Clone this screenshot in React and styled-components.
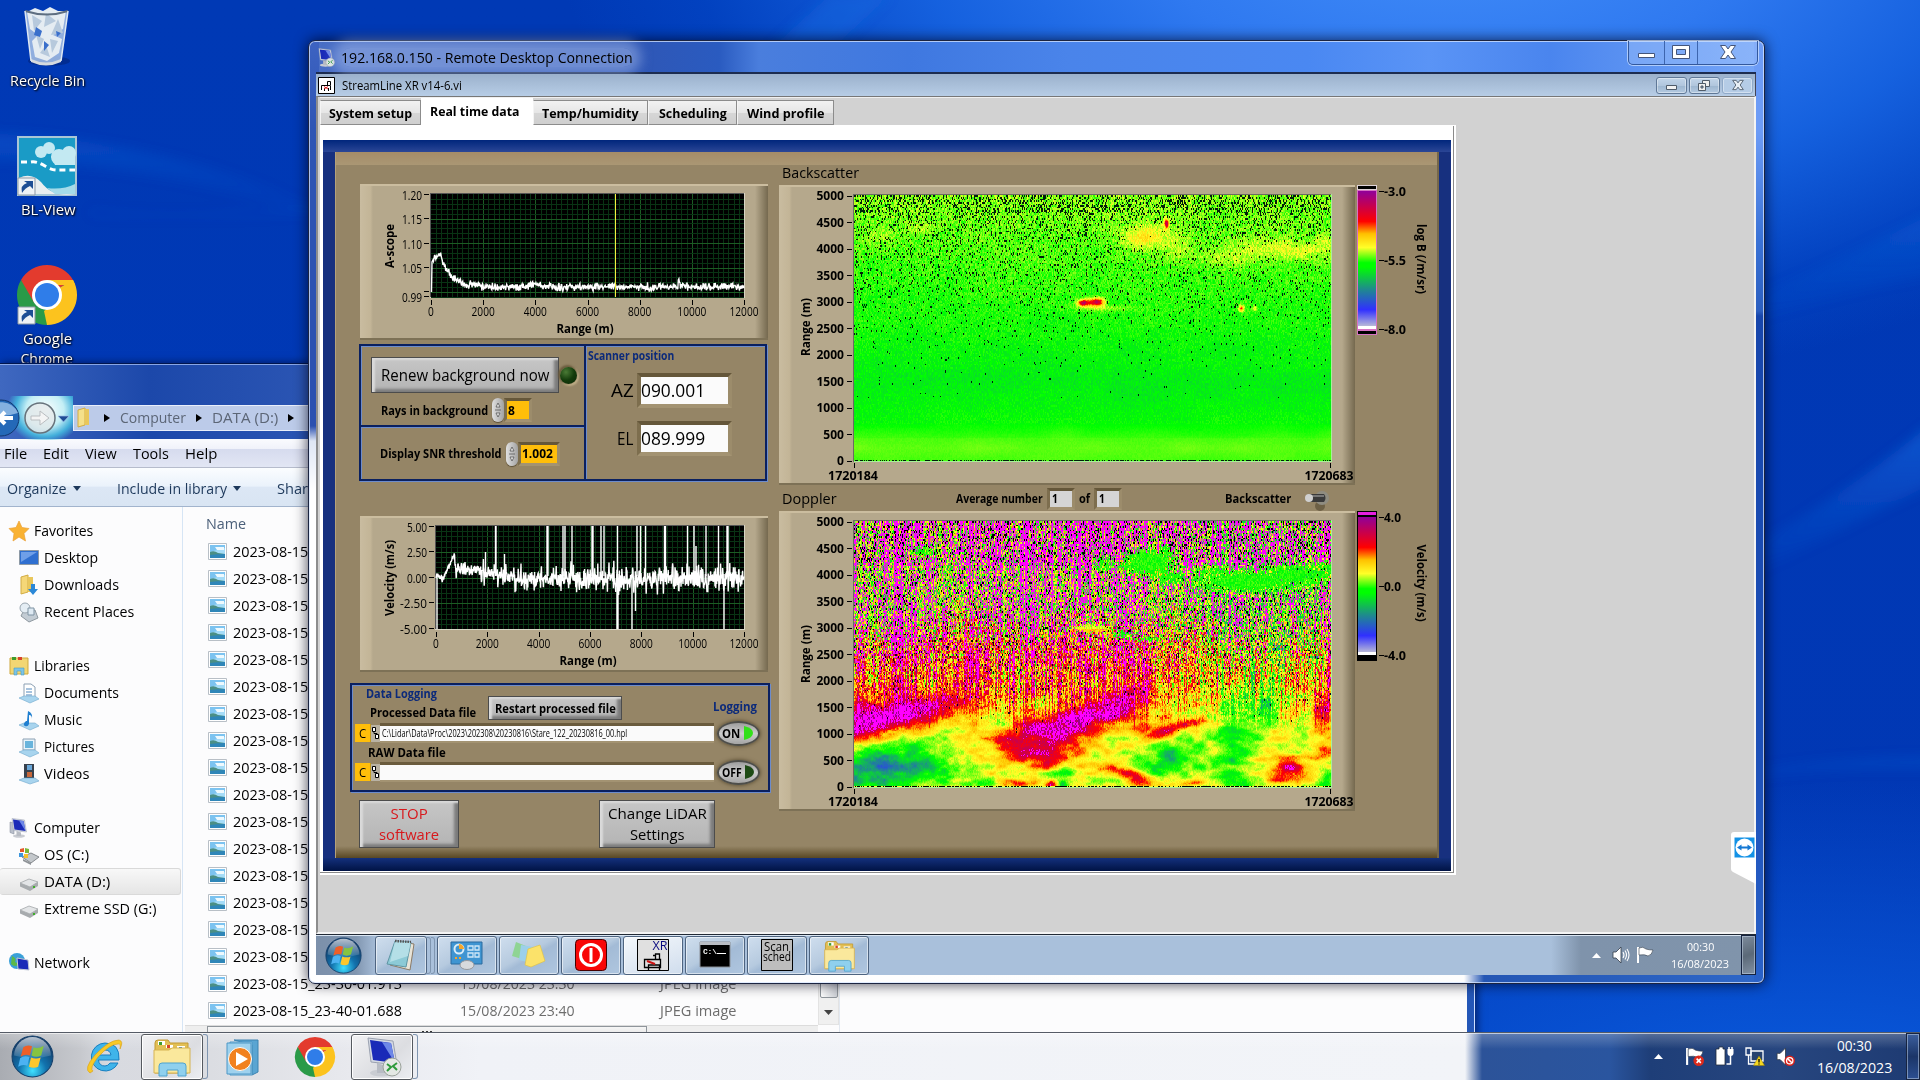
import React, { useEffect, useLayoutEffect, useRef } from 'react';
import styled, { createGlobalStyle, css } from 'styled-components';

const navy = '#0c2a7a';
const tan = '#958566';
const scopeBg = '#b5a88c';

const GlobalStyle = createGlobalStyle`
	* {
		box-sizing: border-box;
	}

	body {
		margin: 0;
		overflow: hidden;
		font-family: 'Open Sans', 'Noto Sans', sans-serif;
		color: #000;
	}

	svg, canvas {
		display: block;
		flex: none;
		overflow: visible;
	}
`;

/* ---------- helpers ---------- */

const makeRandom = (seed) => {
	let s = seed;
	return () => {
		s = (s * 1664525 + 1013904223) % 4294967296;
		return s / 4294967296;
	};
};

const FitBox = styled.span`
	display: inline-block;
	vertical-align: top;
	flex: none;
	width: ${p => p.$w}px;
	height: ${p => p.$lh || Math.round(p.$size * 1.4)}px;
	line-height: ${p => p.$lh || Math.round(p.$size * 1.4)}px;
	font-size: ${p => p.$size}px;
	font-weight: ${p => p.$bold ? 700 : 400};
	color: ${p => p.$color || 'inherit'};
	white-space: nowrap;

	> span {
		display: inline-block;
		transform-origin: 0 50%;
	}
`;

// squeezes a text into the given width
const Fit = ({ w, size = 14, lh, bold, color, children }) => {
	const ref = useRef(null);

	useLayoutEffect(() => {
		const el = ref.current;
		el.style.transform = `scaleX(${w / el.offsetWidth})`;
	}, [w, children]);

	return (
		<FitBox $w={w} $size={size} $lh={lh} $bold={bold} $color={color}>
			<span ref={ref}>{children}</span>
		</FitBox>
	);
};

const SvgText = ({ x, y, w, children, size = 12, bold, anchor = 'middle', rotate, color = '#000' }) => (
	<text
		x={rotate ? 0 : x}
		y={rotate ? 0 : y}
		fill={color}
		fontSize={size}
		fontWeight={bold ? 700 : 400}
		textAnchor={anchor}
		dominantBaseline="central"
		textLength={w}
		lengthAdjust="spacingAndGlyphs"
		transform={rotate ? `translate(${x} ${y}) rotate(${rotate})` : undefined}
	>
		{children}
	</text>
);

/* ---------- icons ---------- */

const Orb = ({ size }) => (
	<svg width={size} height={size} viewBox="0 0 42 42">
		<defs>
			<radialGradient id="orb" cx="50%" cy="85%" r="75%">
				<stop offset="0" stopColor="#3fe0ff" />
				<stop offset=".45" stopColor="#1272ad" />
				<stop offset="1" stopColor="#123a66" />
			</radialGradient>
			<linearGradient id="orbTop" x1="0" y1="0" x2="0" y2="1">
				<stop offset="0" stopColor="#fff" stopOpacity=".7" />
				<stop offset="1" stopColor="#fff" stopOpacity=".1" />
			</linearGradient>
		</defs>
		<circle cx="21" cy="21" r="20" fill="url(#orb)" stroke="#16406b" />
		<path d="M3 20a18 18 0 0 1 36 0q-18 5-36 0z" fill="url(#orbTop)" />
		<path d="M12 12q4-3 8.500-1l-2 9q-4.500-2-9 1z" fill="#ee5f28" />
		<path d="M22 12q4 2 10-1.500l-2.500 9.500q-5 2.500-9.500 0z" fill="#86c440" />
		<path d="M9 22.500q4-3 9-1l-2 8.500q-4.500-2-9 1z" fill="#4cb2f2" />
		<path d="M19.500 22q5 2 9.500 0l-2.500 9q-4 2-9 0z" fill="#fcc72c" />
	</svg>
);

const ChromeIcon = ({ size }) => (
	<svg width={size} height={size} viewBox="0 0 60 60">
		<path d="M30 30L4 15A30 30 0 0 1 56 15z" fill="#e33b2e" />
		<path d="M30 30L56 15A30 30 0 0 1 30 60z" fill="#fcc31e" />
		<path d="M30 30L30 60A30 30 0 0 1 4 15z" fill="#2a9a48" />
		<path d="M30 15h26a30 30 0 0 1 2 5H30z" fill="#fcc31e" />
		<path d="M4 15l13 22.500 8-9-5-8z" fill="#e33b2e" />
		<path d="M43 37L30 60l-3-14 8-6z" fill="#fcc31e" />
		<circle cx="30" cy="30" r="15" fill="#fff" />
		<circle cx="30" cy="30" r="12" fill="#2f7de9" />
	</svg>
);

const MonitorIcon = ({ size, remote }) => (
	<svg width={size} height={size} viewBox="0 0 40 40">
		<ellipse cx="20" cy="36" rx="12" ry="3.500" fill="#c9ccd2" />
		<path d="M15 26l9 3v7h-9z" fill="#b8bcc4" />
		{!remote && <path d="M2 8l8 2v22l-8-3z" fill="#b9bfcb" stroke="#7d8594" />}
		<path d="M6 1l25 3 4 24-26-3z" fill="#d5dae4" stroke="#9aa1b0" />
		<path d="M8 3l21 3 4 20-22-3z" fill="#1a2ab8" />
		<path d="M20 5l9 1 4 20z" fill="#6d87e8" />
		{remote && (
			<>
				<circle cx="30" cy="30" r="9" fill="#e4e8e4" stroke="#9aa19a" />
				<path d="M25 27l4 3-4 4M35 26l-4 3 4 4" stroke="#2d9a3a" strokeWidth="2" fill="none" />
			</>
		)}
	</svg>
);

const FoldersIcon = ({ size }) => (
	<svg width={size} height={size} viewBox="0 0 40 40">
		<path d="M3 6q0-3 3-3h10l2 3h18v30H3z" fill="#e2bf55" stroke="#c29a34" />
		<path d="M6 4h7v4H6z" fill="#fff" />
		<path d="M7 5h3v3H7z" fill="#3c9c2e" />
		<path d="M14 8h7v3h-7z" fill="#fff" />
		<path d="M15 8h3v3h-3z" fill="#d8442a" />
		<path d="M25 9h8v3h-8z" fill="#fff" />
		<path d="M27 10h3v3h-3z" fill="#2d7fc4" />
		<path d="M2 13h15l3-2h18v25H2z" fill="#fae89c" stroke="#d6b353" />
		<path d="M7 39V29q0-3 3-3h21q3 0 3 3v10h-8v-6H15v6z" fill="#8fd0ee" stroke="#4fa3cf" />
	</svg>
);

const IeIcon = () => (
	<svg width="40" height="40" viewBox="0 0 40 40">
		<path d="M20 6a14 14 0 1 0 13 20h-8q-2 3-5 3-6 0-6.500-6H34Q35 6 20 6zm-6 12q1-5 6-5t6 5z" fill="#3fb4ea" stroke="#1a7fc0" />
		<path d="M5 36Q-2 32 10 18 24 3 34 3q5 1 1 9 1-6-2-5-8 0-20 13Q4 32 8 34z" fill="#f8c927" stroke="#d99e10" strokeWidth=".6" />
	</svg>
);

const PlayerIcon = () => (
	<svg width="38" height="40" viewBox="0 0 38 40">
		<path d="M10 3h24v32l-6 3V8z" fill="#5aa5d2" stroke="#3d83b0" />
		<path d="M6 5h22v33H6z" fill="#bfe2f4" stroke="#4c97c6" />
		<path d="M3 6h24v31H3z" fill="#9fd2ee" stroke="#4c97c6" />
		<circle cx="16" cy="22" r="11.500" fill="#f1811f" stroke="#fff" />
		<path d="M12 15l12 7-12 7z" fill="#fff" />
	</svg>
);

const ViIcon = ({ width = 17, height = 17 }) => (
	<svg width={width} height={height} viewBox="0 0 17 17">
		<path d="M.5 .5h16v16H.5z" fill="#fff" stroke="#000" />
		<path d="M3.500 13V8.500h9V13M6.500 14V11M10.500 14V11M9.500 8V4.500h3V8" stroke="#000" fill="none" />
		<path d="M6 9.500l4 2.500M10 9.500l-4 2.500" stroke="#d22" fill="none" />
	</svg>
);

const XrIcon = () => (
	<svg width="32" height="32" viewBox="0 0 32 32">
		<path d="M.5 .5h31v31H.5z" fill="#e0e0e0" stroke="#000" />
		<text x="15.500" y="11" fontSize="12" textLength="15" lengthAdjust="spacingAndGlyphs" fill="#0a0a80">XR</text>
		<path d="M7.500 20.500h16v8h-16zM11.500 31v-5h11v5M18.500 20v-5h4v5M16 16.500h3" fill="none" stroke="#000" strokeWidth="1.300" />
		<path d="M10 22l8 3" stroke="#c11" strokeWidth="2" />
	</svg>
);

const NotepadIcon = () => (
	<svg width="34" height="34" viewBox="0 0 34 34">
		<path d="M12 3l18 3-4 26-20-5z" fill="#e8e4d8" stroke="#8a7a66" />
		<path d="M11 3l16 1-5 25-19-3z" fill="#8ccad6" stroke="#5e95a3" />
		<path d="M11 3l16 1-3 14-18 6z" fill="#c4e8ee" opacity=".7" />
		<path d="M11 3l16 1" stroke="#555" strokeWidth="2.500" strokeDasharray="1.500 1" />
	</svg>
);

const ControlPanelIcon = () => (
	<svg width="34" height="32" viewBox="0 0 34 32">
		<path d="M1 3h31v22H1z" fill="#3f95d2" stroke="#2a6a9f" />
		<circle cx="9" cy="10" r="4.500" fill="none" stroke="#d8ecf8" strokeWidth="2" />
		<path d="M9 10V5a5 5 0 0 1 5 5z" fill="#f5a62b" />
		<path d="M18 7h5v4h-5zM25 7h4v4h-4zM18 14h5v4h-5zM25 14h4v4h-4z" fill="none" stroke="#cfe7f7" strokeWidth="1.300" />
		<path d="M5 19h2M9 19h2" stroke="#f5a62b" strokeWidth="2" />
		<ellipse cx="17" cy="26" rx="7" ry="4.500" fill="#d8dadd" stroke="#96999e" />
	</svg>
);

const NotesIcon = () => (
	<svg width="34" height="28" viewBox="0 0 34 28">
		<path d="M4 1l10 4-4 13-10-3z" fill="#8fd494" />
		<path d="M9 4l13 2-3 16-12-3z" fill="#9cd0ea" />
		<path d="M16 8l12-4 5 16-14 6-6-2z" fill="#fbe26a" stroke="#e0bf3d" strokeWidth=".6" />
	</svg>
);

const PowerIcon = () => (
	<svg width="32" height="32" viewBox="0 0 32 32">
		<rect x=".5" y=".5" width="31" height="31" rx="4" fill="#f80606" stroke="#400" />
		<circle cx="16" cy="16" r="10.500" fill="none" stroke="#fff" strokeWidth="3" />
		<path d="M16 9v14" stroke="#fff" strokeWidth="3" />
	</svg>
);

const CmdIcon = () => (
	<svg width="32" height="28" viewBox="0 0 32 28">
		<path d="M1 1h30v25H1z" fill="#000" stroke="#8a8f96" />
		<path d="M1 1h30v3H1z" fill="#b9bdc4" />
		<text x="4" y="13" fontSize="8" fontWeight="700" fill="#fff" fontFamily="Liberation Mono, monospace" textLength="14">C:\</text>
		<path d="M18 12.500h9" stroke="#fff" />
	</svg>
);

const SchedIcon = () => (
	<svg width="32" height="32" viewBox="0 0 32 32">
		<path d="M.5 .5h31v31H.5z" fill="#bdbdbd" stroke="#000" />
		<text x="3" y="11.500" fontSize="12" textLength="25" lengthAdjust="spacingAndGlyphs">Scan</text>
		<text x="2" y="22" fontSize="12" textLength="28" lengthAdjust="spacingAndGlyphs">sched</text>
	</svg>
);

const RecycleIcon = () => (
	<svg width="50" height="60" viewBox="0 0 50 60">
		<ellipse cx="27" cy="54" rx="21" ry="5" fill="#01257c" opacity=".6" />
		<path d="M3 4l6 50q15 6 30 0l7-50z" fill="#a9c3e6" opacity=".85" />
		<path d="M5 5l8-4 8 3 7-4 8 4 8 0-3 18-10 6 9 4-3 14-12 8-12-4-3-16 6-6-8-6z" fill="#e5ecf2" />
		<path d="M10 8l10 6-8 10zM24 6l10 8-12 6zM36 12l5 14-12 2zM14 28l8 4-4 10zM28 32l8 2-6 12zM18 46l6-8 4 12z" fill="#b7c9dc" />
		<path d="M14 20l6 4-2 6-6-2zM22 34l5 4-5 6zM34 24l5 2-4 4z" fill="#3a6fcb" />
		<path d="M3 4q22 7 43 0" fill="none" stroke="#5e6e80" strokeWidth="2" />
		<path d="M9 52q15 7 30 0l0 3q-15 7-30 0z" fill="#d6dade" />
		<path d="M3 4l6 50M46 4l-7 50" stroke="#dfe8f2" strokeWidth="1.500" />
	</svg>
);

const Shortcut = () => (
	<g>
		<path d="M1 42h17v17H1z" fill="#eef2f5" stroke="#8d99a5" />
		<path d="M5 57q-2-8 5-10l-3-2h9v8l-3-3q-5 2-8 7z" fill="#1d4e94" />
	</g>
);

const BlViewIcon = () => (
	<svg width="60" height="60" viewBox="0 0 60 60">
		<path d="M0 0h60v60H0z" fill="#a9c6d6" />
		<path d="M2 2h56v56H2z" fill="#1a9bc6" />
		<path d="M2 42q12-6 22 4 12 16 34 12H2z" fill="#e9eef0" />
		<path d="M30 52q16 2 28-4v10H38z" fill="#a5dbe9" />
		<g fill="#c3e9f2">
			<circle cx="24" cy="16" r="6" />
			<circle cx="32" cy="12" r="6" />
			<circle cx="42" cy="21" r="8" />
			<circle cx="52" cy="17" r="7" />
			<path d="M34 20h24v9H38z" />
		</g>
		<path d="M4 26h10q6-1 14 4t14 4h16" fill="none" stroke="#fff" strokeWidth="3" strokeDasharray="6 4" />
		<Shortcut />
	</svg>
);

const ShortcutBadge = () => (
	<svg width="60" height="60" viewBox="0 0 60 60"><Shortcut /></svg>
);

const PictureIcon = () => (
	<svg width="19" height="17" viewBox="0 0 19 17">
		<path d="M.5 .5h18v16H.5z" fill="#fff" stroke="#b8bfc6" />
		<path d="M2 2h15v13H2z" fill="#a5dcf8" />
		<path d="M2 2h15v3L2 9z" fill="#7cc3f0" />
		<path d="M2 9q4-2 8 1l7 1v4H2z" fill="#4a8f86" />
		<path d="M2 12q7-1 15-1v4H2z" fill="#2f86b8" />
		<path d="M7 4h9v3H9z" fill="#eef9fe" />
	</svg>
);

const NavIcon = ({ kind }) => {
	const shapes = {
		star: <path d="M10 0l3 6.500 7 1-5 5 1.500 7.500L10 16l-6 4 1-7.500-5-5 7-1z" fill="#f9b233" stroke="#e9a13a" strokeWidth=".7" />,
		desktop: <><path d="M.5 2.500h19v14H.5z" fill="#2f6fd0" stroke="#8d99a5" /><path d="M2 4h16L2 14z" fill="#6f9fe8" /></>,
		downloads: <><path d="M2 2l7-2v17l-7 2z" fill="#f5d778" stroke="#d2ac45" /><path d="M9 2h5v15H9z" fill="#e9c75c" /><path d="M12 9h4v5h3l-5 6-5-6h3z" fill="#2b88d8" /></>,
		recent: <><path d="M5 8h11l3 8-9 4-8-6z" fill="#c3ccd4" stroke="#8e989f" /><circle cx="6" cy="6" r="5" fill="#e4edf4" stroke="#9aa6b0" /><path d="M9 6h6v7H9z" fill="#dfeaf3" stroke="#7f93a3" /></>,
		libraries: <><path d="M1 2h18v16H1z" fill="#f2d673" stroke="#cfa93c" /><path d="M3 1h4v3H3z" fill="#3c9c2e" /><path d="M9 1h4v3H9z" fill="#d8442a" /><path d="M5 19v-7h10v7h-3v-4H8v4z" fill="#7cc4e6" stroke="#489bc4" strokeWidth=".6" /></>,
		documents: <><path d="M5 1h7l4 3v12H5z" fill="#fff" stroke="#8ca0b3" /><path d="M7 6h6M7 9h6M7 12h6" stroke="#4f86bd" /><path d="M0 15l5-2h11l4 3-9 4z" fill="#a8d4ee" stroke="#6fa8cc" strokeWidth=".6" /></>,
		music: <><path d="M0 15l5-2h11l4 3-9 4z" fill="#a8d4ee" stroke="#6fa8cc" strokeWidth=".6" /><path d="M9 1q5 2 4 8 0-4-3-4v9q-1 3-4 2t1-5l1 0z" fill="#1f7fd0" /></>,
		pictures: <><path d="M4 2h12v11H4z" fill="#e8f4fb" stroke="#8ca0b3" /><path d="M6 4h8v7H6z" fill="#69b4dc" /><path d="M0 15l5-2h11l4 3-9 4z" fill="#a8d4ee" stroke="#6fa8cc" strokeWidth=".6" /></>,
		videos: <><path d="M5 0h10v15H5z" fill="#38424e" /><path d="M8 1h5v5H8z" fill="#6aa7d8" /><path d="M8 8h5v5H8z" fill="#c7673a" /><path d="M0 16l5-2h11l4 3-9 3z" fill="#a8d4ee" stroke="#6fa8cc" strokeWidth=".6" /></>,
		os: <><path d="M3 12l9-4 8 4-8 6z" fill="#c4c8cc" stroke="#85898d" /><path d="M4 14l8 4v2l-8-4z" fill="#8f9397" /><path d="M1 4l4-1v4H1z" fill="#e5592b" /><path d="M6 3l4 1v4H6z" fill="#7cb83a" /><path d="M0 8h4v4H0z" fill="#3d96dd" /><path d="M5 9h4v4H5z" fill="#f8c12c" /></>,
		drive: <><path d="M1 11l9-4 9 3-8 5z" fill="#e3e5e7" stroke="#9a9da0" strokeWidth=".7" /><path d="M1 11l10 4v4L1 14.500zM11 15l8-5v4l-8 5z" fill="#a7abae" /><path d="M14 15h2" stroke="#3fae2a" strokeWidth="2" /></>,
		network: <><circle cx="8" cy="8" r="8" fill="#3aa0d8" /><path d="M3 3q5 2 3 6l4 2q-4 4-8 0z" fill="#5cb848" /><path d="M8 5l11 2 1 10-11-1z" fill="#1a2ab8" stroke="#c4cad6" /></>,
	};
	if (kind === 'computer') {
		return <MonitorIcon size={20} />;
	}
	return <svg width="20" height="20" viewBox="0 0 20 20">{shapes[kind]}</svg>;
};

const SpeakerIcon = ({ muted, size = 18 }) => (
	<svg width={size} height={size} viewBox="0 0 18 18">
		<path d="M1 6h3l5-5v16l-5-5H1z" fill="#fff" stroke="#333c4a" strokeWidth=".8" />
		{muted ? (
			<>
				<circle cx="13" cy="13" r="5" fill="#d8201c" />
				<circle cx="13" cy="13" r="3" fill="none" stroke="#fff" strokeWidth="1.200" />
				<path d="M11 11l4 4" stroke="#fff" strokeWidth="1.400" />
			</>
		) : (
			<path d="M11 6q2 3 0 6M13 4.500q3 4.500 0 9M15 3q4 6 0 12" fill="none" stroke="#fff" strokeWidth="1.100" />
		)}
	</svg>
);

const FlagIcon = ({ error, size = 18 }) => (
	<svg width={size} height={size} viewBox="0 0 18 18">
		<path d="M2 1v16" stroke="#fff" strokeWidth="2" />
		<path d="M3 2q4-2 7 1 3 1 7 1-1 5-5 6-3-2-9-1z" fill="#fff" stroke="#333c4a" strokeWidth=".6" />
		{error && (
			<>
				<circle cx="13" cy="13" r="5" fill="#dc2a1c" />
				<path d="M11 11l4 4M15 11l-4 4" stroke="#fff" strokeWidth="1.500" />
			</>
		)}
	</svg>
);

const BatteryIcon = () => (
	<svg width="19" height="19" viewBox="0 0 19 19">
		<path d="M4 0h4v2h2v16H1V2h3z" fill="#fff" stroke="#222c3a" strokeWidth=".8" />
		<path d="M12.500 2h6v4q0 3-3 3t-3-3z" fill="#fff" />
		<path d="M14 0v3M17 0v3M15.500 8v9h-4" stroke="#fff" strokeWidth="1.500" fill="none" />
	</svg>
);

const NetworkIcon = () => (
	<svg width="20" height="19" viewBox="0 0 20 19">
		<path d="M6 4h12v10H6z" fill="#27436f" stroke="#fff" strokeWidth="1.300" />
		<path d="M1 1h5v7H1zM3.500 8v9H11" fill="none" stroke="#fff" strokeWidth="1.300" />
		<path d="M14 9l5.500 9.500h-11z" fill="#f6d821" stroke="#9a7f00" strokeWidth=".5" />
		<path d="M14 12v3.500M14 16.500v1" stroke="#000" strokeWidth="1.300" />
	</svg>
);

/* ---------- desktop ---------- */

const Desktop = styled.div`
	position: relative;
	width: 1920px;
	height: 1080px;
	overflow: hidden;
	background:
		radial-gradient(ellipse 900px 480px at 1450px -90px, #4590fa 0, #2f79f0 35%, rgba(25, 104, 230, .85) 60%, rgba(4, 76, 205, .45) 85%, rgba(1, 57, 181, 0) 100%),
		radial-gradient(ellipse 900px 330px at 1800px 1110px, #0a5cdf, rgba(4, 72, 200, 0)),
		linear-gradient(#0039b5, #0137b4);
`;

const Wallpaper = styled.svg`
	position: absolute;
	inset: 0;
`;

// faint light streaks behind the windows
const Streaks = () => (
	<Wallpaper width="1920" height="1080" viewBox="0 0 1920 1080">
		<defs>
			<filter id="soft"><feGaussianBlur stdDeviation="6" /></filter>
			<linearGradient id="streak" x1="0" y1="0" x2="0" y2="1">
				<stop offset="0" stopColor="#1c74e8" stopOpacity=".5" />
				<stop offset="1" stopColor="#0a55d4" stopOpacity="0" />
			</linearGradient>
		</defs>
		<g filter="url(#soft)">
			<path d="M1700 570Q1800 530 1930 425v60Q1820 540 1700 600z" fill="url(#streak)" />
			<path d="M1700 320Q1820 270 1930 215v60Q1800 300 1700 340z" fill="url(#streak)" opacity=".6" />
			<path d="M1700 780Q1800 758 1930 757v12Q1800 765 1700 790z" fill="url(#streak)" opacity=".5" />
			<path d="M-20 133Q180 140 330 215v10Q180 165-20 160z" fill="url(#streak)" opacity=".6" />
			<path d="M90 210Q200 218 330 205v5Q200 225 90 216z" fill="url(#streak)" opacity=".5" />
			<path d="M830-5L770 50h60l60-55z" fill="#1c6be0" opacity=".4" />
		</g>
	</Wallpaper>
);

const DesktopIcons = styled.div`
	position: absolute;
	left: 0;
	top: 7px;
	width: 93px;
	display: grid;
	grid-template-rows: 129px 129px 129px;
	justify-items: center;
`;

const DesktopItem = styled.div`
	display: flex;
	flex-direction: column;
	align-items: center;
	color: #fff;
	text-shadow: 1px 1px 2px #000, 0 0 2px #001;
	text-align: center;
`;

const IconStack = styled.div`
	display: grid;
	height: 60px;
	margin-bottom: 4px;

	> * {
		grid-area: 1 / 1;
	}
`;

/* ---------- explorer window ---------- */

const ExplorerWindow = styled.section`
	position: absolute;
	left: 0;
	top: 363px;
	width: 1475px;
	height: 717px;
	padding-right: 7px;
	border-top: 1px solid #01164f;
	border-right: 1px solid #cfe0ff;
	background: linear-gradient(90deg, #3f68c0 0, #1c48aa 150px, #2c56b4 320px, #2457b8 100%);
	box-shadow: inset 0 1px 0 #88a6e6, 2px 0 8px rgba(0, 0, 30, .6);
`;

const AddressRow = styled.div`
	display: flex;
	align-items: center;
	height: 75px;
	padding-top: 32px;
`;

const NavArrows = styled.div`
	display: flex;
	width: 73px;
	height: 44px;
	background: radial-gradient(ellipse 38px 34px at 45px 14px, #fff 0, #c3eef5 50%, rgba(70, 190, 225, .85) 78%, rgba(40, 140, 210, 0) 100%);
`;

const AddressBar = styled.div`
	display: flex;
	align-items: center;
	gap: 9px;
	flex: 1;
	height: 26px;
	padding-left: 3px;
	border: 1px solid #e8eefb;
	background: #bccbe9;
	color: #5c6676;
`;

const Crumb = styled.span`
	width: 0;
	height: 0;
	margin: 0 1px;
	border: 4.500px solid transparent;
	border-left: 6px solid #000;
	border-right: 0;
`;

const MenuBar = styled.div`
	display: flex;
	align-items: center;
	height: 29px;
	padding: 1px 0 0 4px;
	gap: 16px;
	background: linear-gradient(#fafbfe 0, #f0f2fa 35%, #d6dbee 36%, #e2e6f4 100%);
	border-bottom: 1px solid #b6bccc;
`;

const ToolBar = styled.div`
	display: flex;
	align-items: center;
	height: 39px;
	padding: 3px 0 0 7px;
	color: #1e395b;
	background: linear-gradient(#fbfdff 0, #eaf2fb 48%, #dce7f5 50%, #d9e5f3 100%);
	border-bottom: 1px solid #a2b4cd;
`;

const Caret = styled.span`
	margin: 0 36px 0 6px;
	border: 4px solid transparent;
	border-top: 5px solid #1e395b;
	border-bottom: 0;
`;

const ExplorerBody = styled.div`
	display: grid;
	grid-template: 518px 56px / 183px 635px 21px 1fr;
	background: #fcfcfd;
`;

const NavPane = styled.nav`
	grid-row: 1 / 3;
	padding-top: 10px;
	border-right: 1px solid #d6e5f5;
`;

const NavItem = styled.div`
	display: flex;
	align-items: center;
	gap: 5px;
	height: 27px;
	padding-left: ${p => p.$sub ? 19 : 9}px;
	margin-top: ${p => p.$gap ? 27 : 0}px;
	width: 181px;
	${p => p.$active && css`
		background: linear-gradient(#f8f8f8, #e5e5e5);
		border: 1px solid #d9d9d9;
		border-left: 0;
		border-radius: 3px;
	`}
`;

const FileList = styled.div`
	padding: 6px 0 0 25px;
`;

const FileHeader = styled.div`
	height: 25px;
	margin-left: -2px;
	padding-top: 1px;
	color: #4c607a;
`;

const FileRow = styled.div`
	display: grid;
	grid-template-columns: 25px 227px 200px 1fr;
	align-items: center;
	height: 27px;
`;

const ScrollTrack = styled.div`
	display: flex;
	flex-direction: column;
	justify-content: flex-end;
	background: #f0f0f0;
	border: 1px solid #e3e3e3;
	padding-bottom: 8px;
	align-items: center;
`;

const ScrollThumb = styled.div`
	width: 18px;
	height: 300px;
	margin-bottom: 12px;
	border: 1px solid #8f959b;
	border-radius: 2px;
	background: linear-gradient(90deg, #fff, #cdd0d6);
`;

const Preview = styled.div`
	grid-row: 1 / 3;
	grid-column: 4;
	border-left: 1px solid #e2e8f0;
`;

const HScroll = styled.div`
	display: flex;
	grid-area: 2 / 2;
	height: 20px;
	margin-left: 2px;
	background: #eee;
	border-top: 1px solid #dcdcdc;
`;

const HThumb = styled.div`
	display: grid;
	place-items: start center;
	width: 440px;
	margin-left: 22px;
	padding-top: 4px;
	border: 1px solid #8f959b;
	background: linear-gradient(#f6f6f6, #d4d4d4);
`;

const navItems = [
	['star', 'Favorites', 59],
	['desktop', 'Desktop', 54, 1],
	['downloads', 'Downloads', 75, 1],
	['recent', 'Recent Places', 90, 1],
	['libraries', 'Libraries', 56, 0, 1],
	['documents', 'Documents', 75, 1],
	['music', 'Music', 38, 1],
	['pictures', 'Pictures', 51, 1],
	['videos', 'Videos', 45, 1],
	['computer', 'Computer', 66, 0, 1],
	['os', 'OS (C:)', 45, 1],
	['drive', 'DATA (D:)', 66, 1, 0, 1],
	['drive', 'Extreme SSD (G:)', 112, 1],
	['network', 'Network', 56, 0, 1],
];

const fileTimes = [
	'20-50', '21-00', '21-10', '21-20', '21-30', '21-40', '21-50', '22-00', '22-10',
	'22-20', '22-30', '22-40', '22-50', '23-00', '23-10', '23-20',
].map((t) => [`2023-08-15_${t}-01.913`, `15/08/2023 ${t.replace('-', ':')}`]);

const files = [
	...fileTimes,
	['2023-08-15_23-30-01.913', '15/08/2023 23:30'],
	['2023-08-15_23-40-01.688', '15/08/2023 23:40'],
];

const Explorer = () => (
	<ExplorerWindow>
		<AddressRow>
			<NavArrows>
				<svg width="73" height="44" viewBox="0 0 73 44">
					<circle cx="1" cy="22" r="18" fill="#2469b8" stroke="#12366e" />
					<path d="M-14 15a18 18 0 0 1 32 2q-14 5-32 2z" fill="#9cc3ea" opacity=".8" />
					<path d="M13 22H0M5 16l-6 6 6 6" stroke="#fff" strokeWidth="4" fill="none" />
					<circle cx="40" cy="22" r="15" fill="#e4e9ea" fillOpacity=".8" stroke="#67727b" strokeWidth="1.500" />
					<path d="M31 20h9v-5l9 7-9 7v-5h-9z" fill="#f4f4f4" stroke="#b9bdc0" />
					<path d="M58 20h11l-5.500 6z" fill="#1f4b94" stroke="#9fc0ea" strokeWidth=".7" />
				</svg>
			</NavArrows>
			<AddressBar>
				<svg width="17" height="20" viewBox="0 0 17 20">
					<path d="M1 2l7-2v17l-7 2z" fill="#f5e08a" stroke="#d2ac45" />
					<path d="M8 1h4v16H8z" fill="#e9c75c" />
				</svg>
				<Crumb />
				<Fit w={66} size={14}>Computer</Fit>
				<Crumb />
				<Fit w={66} size={14}>DATA (D:)</Fit>
				<Crumb />
			</AddressBar>
		</AddressRow>
		<MenuBar>
			<Fit w={23}>File</Fit>
			<Fit w={26}>Edit</Fit>
			<Fit w={32}>View</Fit>
			<Fit w={36}>Tools</Fit>
			<Fit w={32}>Help</Fit>
		</MenuBar>
		<ToolBar>
			<Fit w={60}>Organize</Fit>
			<Caret />
			<Fit w={110}>Include in library</Fit>
			<Caret />
			<Fit w={72}>Share with</Fit>
		</ToolBar>
		<ExplorerBody>
			<NavPane>
				{navItems.map(([kind, text, w, sub, gap, active]) => (
					<NavItem key={text} $sub={sub} $gap={gap} $active={active}>
						<NavIcon kind={kind} />
						<Fit w={w}>{text}</Fit>
					</NavItem>
				))}
			</NavPane>
			<FileList>
				<FileHeader><Fit w={40}>Name</Fit></FileHeader>
				{files.map(([name, date]) => (
					<FileRow key={name}>
						<PictureIcon />
						<Fit w={169}>{name}</Fit>
						<Fit w={115} color="#6d6d6d">{date}</Fit>
						<Fit w={77} color="#6d6d6d">JPEG image</Fit>
					</FileRow>
				))}
			</FileList>
			<ScrollTrack>
				<ScrollThumb />
				<svg width="9" height="6" viewBox="0 0 9 6"><path d="M0 0h9L4.500 5z" fill="#444" /></svg>
			</ScrollTrack>
			<Preview />
			<HScroll>
				<HThumb>
					<svg width="10" height="8" viewBox="0 0 10 8"><path d="M1 0v8M5 0v8M9 0v8" stroke="#333" strokeWidth="2" /></svg>
				</HThumb>
			</HScroll>
		</ExplorerBody>
	</ExplorerWindow>
);

/* ---------- remote desktop window ---------- */

const RemoteWindow = styled.section`
	position: absolute;
	left: 308px;
	top: 40px;
	width: 1457px;
	height: 944px;
	padding: 1px 8px 8px 7px;
	border: 1px solid #1b2440;
	border-radius: 7px;
	background:
		linear-gradient(#3d63c2 0, #2e55b4 90px, #2b50b0 385px, #dfe6f4 400px, #fff 450px) left / 10px 100% no-repeat,
		linear-gradient(#6d9cf6 0, #6d9cf6 90px, #3a72d6 200px, #2c5fc0 270px, #1746ac 275px, #1d50b8 75%, #2a62c8 100%) right / 10px 100% no-repeat,
		linear-gradient(90deg, #fff 0, #fdfdfd 1155px, #2456b4 1175px, #2e67c8 100%) bottom / 100% 10px no-repeat,
		linear-gradient(90deg, #4a6fc6 0, #2f57b6 330px, #2a5bc0 410px, #4a7edd 450px, #3f78e0 600px, #4a84ea 760px, #4a88f2 1000px, #5a94f6 1120px, #4a85ee 1240px, #76a6f8 100%);
	box-shadow: inset 0 0 0 1px rgba(215, 230, 255, .75), 0 0 14px rgba(0, 0, 20, .75);
`;

const RemoteTitle = styled.div`
	display: flex;
	justify-content: space-between;
	height: 30px;
`;

const TitleText = styled.div`
	display: flex;
	align-items: center;
	gap: 6px;
	padding-top: 1px;

	> span {
		border-radius: 10px;
		background: rgba(165, 188, 235, .5);
		box-shadow: 0 0 12px 8px rgba(165, 188, 235, .5);
	}
`;

const CaptionButtons = styled.div`
	display: grid;
	grid-template-columns: 35px 33px 60px;
	height: 24px;
	margin: -1px -2px 0 0;
	border: 1px solid #33589c;
	border-top: 0;
	border-radius: 0 0 5px 5px;
	box-shadow: 0 0 0 1px rgba(210, 228, 255, .7);
	background: rgba(190, 215, 255, .3);

	> * {
		display: grid;
		place-items: center;
		padding-bottom: 1px;
	}

	> * + * {
		border-left: 1px solid #3d65ae;
	}
`;

const RemoteScreen = styled.div`
	display: flex;
	flex-direction: column;
	width: 1440px;
	height: 903px;
	border-top: 2px solid #1c2c50;
	background: #d2d2d2;
`;

const ViTitle = styled.div`
	display: flex;
	align-items: center;
	height: 22px;
	padding: 0 2px 0 2px;
	gap: 7px;
	background: linear-gradient(#9bb1cc, #b7cde6);
	border-right: 1px solid #445;
`;

const ViButton = styled.span`
	display: grid;
	place-items: center;
	width: 31px;
	height: 17px;
	margin-left: ${p => p.$first ? 'auto' : '-5px'};
	border: 1px solid ${p => p.$dim ? '#8fa9c8' : '#5f7897'};
	border-radius: 3px;
	background: ${p => p.$dim ? '#b5cce6' : 'linear-gradient(#c2d5e9, #b1c6dd 50%, #9db6d0 52%, #b3c9e0)'};
	box-shadow: inset 0 0 0 1px rgba(255, 255, 255, .4);
`;

const MdiArea = styled.div`
	flex: 1;
	border-top: 1px solid #777;
	border-left: 2px solid #8d8d8d;
	border-right: 2px solid #f4f4f4;
	border-bottom: 2px solid #f4f4f4;
	padding-left: 2px;
	display: grid;
	grid-template-columns: 1136px 1fr;
	align-content: start;
`;

const TabRow = styled.div`
	display: flex;
	align-items: flex-end;
	height: 28px;
	grid-column: 1 / 3;
	border-top: 1px solid #f0f0f0;
`;

const Tab = styled.div`
	display: flex;
	justify-content: center;
	align-items: center;
	width: ${p => p.$w}px;
	height: ${p => p.$active ? 27 : 25}px;
	padding: ${p => p.$active ? '0 6px 2px 0' : '1px 0 0'};
	background: ${p => p.$active ? '#fff' : 'linear-gradient(#f2f2f2 0, #e6e6e6 50%, #d6d6d6 52%, #cfcfcf)'};
	border: 1px solid ${p => p.$active ? '#fff' : '#8c8c8c'};
	border-left-color: ${p => p.$active ? '#fff' : '#f4f4f4'};
`;

const TabPage = styled.div`
	width: 1136px;
	height: 750px;
	padding: 14px 3px 0 3px;
	background: #fff;
	border-top: 1px solid #fff;
	border-right: 2px solid #fff;
	border-bottom: 2px solid #fff;
	box-shadow: inset -1px -1px 0 #8a8a8a;
`;

const BlueFrame = styled.div`
	width: 1128px;
	height: 731px;
	padding: 12px;
	background:
		linear-gradient(#00267c, #2b4696) top / 100% 12px no-repeat,
		linear-gradient(#14307c, #001344) bottom / 100% 13px no-repeat,
		#17307f;
`;

const FrontPanel = styled.div`
	display: flex;
	gap: 9px;
	width: 1104px;
	height: 706px;
	padding-left: 15px;
	background:
		linear-gradient(#a58c68, #aa9774) top / 100% 13px no-repeat,
		linear-gradient(rgba(149, 133, 102, 1), #584724) bottom / 100% 12px no-repeat,
		${tan};
	border-left: 1px solid #b4a17a;
	border-right: 2px solid #75674a;
`;

const LeftColumn = styled.div`
	width: 420px;
	margin-left: -1px;
	padding-top: 32px;
`;

const ScopePanel = styled.div`
	width: ${p => p.$w}px;
	height: ${p => p.$h}px;
	background:
		linear-gradient(90deg, #c9bca0, #c3b597 80%, rgba(195, 181, 151, 0)) left / 13px 100% no-repeat,
		linear-gradient(90deg, rgba(100, 90, 70, 0), #75694f) right / 13px 100% no-repeat,
		${scopeBg};
	border-top: 2px solid #cbbd9f;
	border-bottom: 2px solid #7d7156;
`;

const LeftScope = styled(ScopePanel)`
	margin: ${p => p.$mt}px 0 0 10px;
`;

const frameCss = css`
	border: 2px solid #0a2060;
	box-shadow: inset 1px 1px 0 #6d8ccc, 1px 1px 0 #6d8ccc;
`;

const ControlGroup = styled.div`
	display: grid;
	grid-template: 81px 52px / 225px 179px;
	width: 408px;
	height: 137px;
	margin: 4px 0 0 9px;
	${frameCss}
`;

const RenewBox = styled.div`
	padding: 11px 0 0 10px;
	border-right: 2px solid #0a2060;
	border-bottom: 2px solid #0a2060;
`;

const SnrBox = styled.div`
	display: flex;
	align-items: center;
	padding: 1px 0 0 19px;
	border-right: 2px solid #0a2060;
	box-shadow: inset 0 1px 0 #6d8ccc;
`;

const ScannerBox = styled.div`
	grid-area: 1 / 2 / 3 / 3;
	padding: 1px 0 0 2px;
	box-shadow: inset 1px 0 0 #6d8ccc;
`;

const Row = styled.div`
	display: flex;
	align-items: ${p => p.$align || 'center'};
	gap: ${p => p.$gap || 0}px;
	padding-left: ${p => p.$pl || 0}px;
	margin-top: ${p => p.$mt || 0}px;
`;

const MetalButton = styled.button`
	display: flex;
	flex-direction: column;
	align-items: center;
	justify-content: center;
	flex: none;
	width: ${p => p.$w}px;
	height: ${p => p.$h}px;
	padding: 0;
	font-family: inherit;
	color: ${p => p.$color || '#000'};
	border: 1px solid #4c4c4c;
	border-radius: 0;
	background: linear-gradient(#c6c6c6, #b4b4b4);
	box-shadow: inset 3px 2px 2px #dadada, inset -4px -3px 3px #7b7b7b;
`;

const Led = styled.span`
	width: 17px;
	height: 17px;
	margin-left: 1px;
	border-radius: 50%;
	background: radial-gradient(circle at 35% 30%, #4a7a35, #143c0c 50%, #0b2606);
	box-shadow: -1px -1px 2px 1px #6b5c3e, 1px 1px 2px 1px #c4b28b;
`;

const Inset = styled.div`
	display: flex;
	align-items: center;
	flex: none;
	width: ${p => p.$w}px;
	height: ${p => p.$h}px;
	padding-left: ${p => p.$pl ?? 1}px;
	border: solid;
	border-width: ${p => p.$b || 3}px;
	border-color: #65573a #9c8c6b #a39372 #7d6e4e;
	background: ${p => p.$bg || '#fbfbfb'};
`;

const SpinnerButton = styled.span`
	display: flex;
	flex-direction: column;
	align-items: center;
	justify-content: space-evenly;
	width: 12px;
	height: 24px;
	margin: 0 0 0 4px;
	border-radius: 6px;
	background: linear-gradient(90deg, #e0e0e0, #a2a2a2);
	box-shadow: 0 1px 1px #5b4f36;
`;

const Spin = () => (
	<SpinnerButton>
		<svg width="6" height="16" viewBox="0 0 6 16">
			<path d="M1 5l2-4 2 4zM0 8h6M1 11l2 4 2-4z" fill="#eee" stroke="#555" strokeWidth=".8" />
		</svg>
	</SpinnerButton>
);

const LogBox = styled.div`
	width: 420px;
	height: 109px;
	margin-top: 11px;
	padding: 0 0 0 3px;
	${frameCss}
`;

const LogHeader = styled.div`
	display: grid;
	grid-template-columns: 133px 225px 60px;
	height: 36px;
`;

const PathRow = styled.div`
	display: flex;
	align-items: center;
	height: 24px;
`;

const Drive = styled.span`
	display: grid;
	place-items: center;
	width: 16px;
	height: 18px;
	background: #ffbe0a;
	border-right: 1px solid #c29a20;
`;

const PathIcon = () => (
	<svg width="9" height="17" viewBox="0 0 9 17">
		<path d="M0 0h9v17H0z" fill="#b9b2a3" />
		<path d="M1.500 2.500h3v4h-3zM4.500 9.500h3v4h-3zM3 6.500v2h3v1" fill="#fff" stroke="#000" />
	</svg>
);

const PathField = styled.div`
	width: 334px;
	height: 20px;
	padding-left: 2px;
	background: #fafafa;
	border-top: 3px solid #6a5b3d;
	border-bottom: 2px solid #a39372;
	line-height: 14px;
`;

const LogSwitch = styled.span`
	display: flex;
	align-items: center;
	width: 43px;
	height: 25px;
	margin-left: 3px;
	padding-left: 3px;
	border-radius: 50%;
	border: 2px solid #4e4e4a;
	background: linear-gradient(#9d9d9d, #cdcdcd 50%, #a4a4a4);
	box-shadow: 0 0 4px #4d4128;
`;

const RightColumn = styled.div`
	width: 655px;
`;

const ChartTitle = styled.div`
	display: flex;
	align-items: center;
	height: ${p => p.$h}px;
	padding: ${p => p.$pt || 0}px 0 0 3px;
`;

const ChartRow = styled.div`
	display: flex;
	gap: 2px;
	height: 300px;
`;

const HeatPanel = styled(ScopePanel)`
	display: grid;
	grid-template: 8px 266px 22px / 75px 477px 24px;

	> svg {
		grid-area: 1 / 1 / -1 / -1;
	}

	> canvas {
		grid-area: 2 / 2;
	}
`;

/* ---------- line plots ---------- */

const Grid = ({ x, y, w, h, major, rows }) => {
	const lines = [];
	const step = w / 60;
	for (let i = 1; i < 60; i++) {
		const strong = i % 10 === 0;
		lines.push(<path key={`v${i}`} d={`M${Math.round(x + i * step) + .5} ${y}v${h}`} stroke={strong ? '#1c5c24' : '#093314'} />);
	}
	for (let i = 1; i * rows < h; i++) {
		const strong = i % major === 0;
		lines.push(<path key={`h${i}`} d={`M${x} ${Math.round(y + i * rows) + .5}h${w}`} stroke={strong ? '#1c5c24' : '#093314'} />);
	}
	return <g>{lines}</g>;
};

const aScopePath = () => {
	const rnd = makeRandom(7);
	const pts = ['M71.500 108', 'L72 78'];
	for (let x = 73; x < 384; x += .55) {
		const d = x - 71;
		let y = 103;
		if (d < 10) {
			y = 77 - Math.min(d, 7) * .9;
		} else if (d < 36) {
			y = 71 + (1 - Math.exp(-(d - 9) / 11)) * 32;
		} else if (d < 50) {
			y = 101;
		}
		y -= Math.max(0, 4 - Math.abs(d - 104) * .5);
		if (Math.abs(d - 248) < 1) {
			y -= 5;
		}
		pts.push(`L${x.toFixed(1)} ${(y + (rnd() + rnd() - 1) * 4.800).toFixed(1)}`);
	}
	return pts.join('');
};

const upSpikes = [59.5, 60, 111, 112, 127, 129, 136, 156, 157, 165, 168, 181.5, 201, 204.5, 209.5, 228.5, 229.5, 251.5, 258, 270, 282.5, 291, 292];
const downSpikes = [1, 181, 182, 196, 288];

const velocityPath = () => {
	const rnd = makeRandom(21);
	const pts = ['M76 62'];
	for (let d = 1; d < 308; d += .4) {
		let mid = 62.5;
		let amp = 11;
		if (d < 19) {
			mid = d < 3 ? 60 : d < 6 ? 62 : 65 - (d - 6) * 2.1;
			amp = 3;
		} else if (d < 42) {
			mid = 53.5;
			amp = 7;
		} else if (d < 75) {
			mid = 54 + (d - 42) * .25;
			amp = 10;
		} else if (d > 120) {
			amp = 13;
		}
		const n = rnd() + rnd() + rnd() - 1.5;
		pts.push(`L${(76 + d).toFixed(1)} ${(mid + n * amp).toFixed(1)}`);
	}
	return pts.join('');
};

const LineScope = ({ left, top, height, yLabels, yTitle, yTitleW, path, cursor, rows, major, titleX, titleW, children }) => {
	const w = 384 - left;
	return (
		<svg width="408" height="152" viewBox="0 2 408 152">
			<path d={`M${left - 1} ${top - 1}h${w + 2}v${height + 2}h-${w + 2}z`} fill="#d8d4c4" />
			<path d={`M${left - 1} ${top - 1}h${w + 1}v${height + 1}h-${w + 1}z`} fill="#555" />
			<path d={`M${left} ${top}h${w}v${height}h-${w}z`} fill="#000" />
			<Grid x={left} y={top} w={w} h={height} rows={rows} major={major} />
			{children}
			<path d={path} fill="none" stroke="#fff" strokeWidth="1.400" />
			{cursor && <path d={`M${cursor}.5 ${top}v${height}`} stroke="#f4ee3c" />}
			{yLabels.map(([text, y]) => (
				<g key={text}>
					<SvgText x={left - 9} y={y + .5} w={text.length * 5 + (text[0] === '-' ? 2 : 0)} anchor="end">{text}</SvgText>
					<path d={`M${left - 7} ${y}h5`} stroke="#000" />
				</g>
			))}
			{[0, 2000, 4000, 6000, 8000, 10000, 12000].map((v, i) => (
				<g key={v}>
					<path d={`M${Math.round(left + i * w / 6) + .5} ${top + height + 3}v5`} stroke="#000" />
					<SvgText x={left + i * w / 6} y={top + height + 14.5} w={String(v).length * 5.8}>{v}</SvgText>
				</g>
			))}
			<SvgText x={titleX} y={top + height + 31.5} w={titleW} bold>Range (m)</SvgText>
			<SvgText x={29} y={top + height / 2 + .5} w={yTitleW} bold rotate={-90}>{yTitle}</SvgText>
		</svg>
	);
};

/* ---------- heat maps ---------- */

const stops = [
	[0, 225, 225, 225], [.15, 48, 48, 255], [.3, 30, 140, 140], [.46, 0, 255, 0], [.59, 255, 255, 40],
	[.69, 255, 192, 0], [.78, 255, 0, 0], [.99, 144, 0, 154], [1, 255, 0, 255],
];

const heatColor = (v) => {
	if (v >= 1) {
		return [255, 0, 255];
	}
	for (let i = 1; i < stops.length; i++) {
		if (v <= stops[i][0]) {
			const a = stops[i - 1];
			const b = stops[i];
			const t = (Math.max(v, 0) - a[0]) / (b[0] - a[0]);
			return [1, 2, 3].map((k) => a[k] + (b[k] - a[k]) * t);
		}
	}
	return [255, 0, 255];
};

const clamp = (v, lo, hi) => Math.max(lo, Math.min(hi, v));

const blob = (x, y, [bx, by, rx, ry, amp, tilt = 0]) => {
	const dx = (x - bx) / rx;
	const dy = (y - by + tilt * (x - bx)) / ry;
	return amp * Math.exp(-(dx * dx + dy * dy));
};

// value noise, smooth over cells of the given size
const makeField = (seed, cw, ch) => {
	const rnd = makeRandom(seed);
	const cols = Math.ceil(477 / cw) + 2;
	const grid = Array.from({ length: cols * (Math.ceil(266 / ch) + 2) }, () => rnd() * 2 - 1);
	return (x, y) => {
		const gx = x / cw;
		const gy = y / ch;
		const ix = Math.floor(gx);
		const iy = Math.floor(gy);
		const fx = (gx - ix) * (gx - ix) * (3 - 2 * (gx - ix));
		const fy = (gy - iy) * (gy - iy) * (3 - 2 * (gy - iy));
		const at = (a, b) => grid[b * cols + a];
		return (at(ix, iy) * (1 - fx) + at(ix + 1, iy) * fx) * (1 - fy)
			+ (at(ix, iy + 1) * (1 - fx) + at(ix + 1, iy + 1) * fx) * fy;
	};
};

// one random number per range gate, gates are a bit taller than a pixel
const makeGates = (seed) => {
	const rnd = makeRandom(seed);
	const cells = Array.from({ length: 477 * 168 }, rnd);
	return (x, y) => cells[Math.floor(y * 166 / 266) * 477 + x];
};

const backBlobs = [
	[294, 40, 24, 11, .1], [285, 49, 14, 6, .03], [324, 54, 14, 14, .05], [375, 62, 30, 9, .05], [405, 52, 36, 11, .045],
	[450, 56, 36, 10, .055], [68, 33, 12, 5, .05], [470, 45, 12, 5, .04], [25, 42, 14, 8, .03],
];
const backSpots = [
	[228, 107.500, 5, 3.200, .36], [236, 107, 7, 4, .25], [244, 106.500, 6, 4, .34], [387, 113, 2.600, 3.200, .28], [400, 113, 3, 2.500, .12], [312, 28, 2, 4.500, .4],
	[250, 113, 30, 3, .07],
];

const backscatterPixel = () => {
	const g1 = makeGates(11);
	const g2 = makeGates(57);
	const soft = makeField(3, 30, 14);
	const patchy = makeField(31, 12, 6);
	return (x, y) => {
		const km = (1 - y / 266) * 5;
		const spot = backSpots.reduce((s, b) => s + blob(x, y, b), 0);
		const patch = backBlobs.reduce((s, b) => s + blob(x, y, b), 0);
		let black = km < 1.2 ? 0 : Math.pow((km - 1.1) / 3.9, 2.1) * .2 + .005;
		if (y < 18) {
			black += .1;
		}
		black *= clamp(1 - patch * 14 - spot * 10, .02, 1);
		if (y >= 265) {
			black = .6;
		}
		if (g1(x, y) < black) {
			return [0, 30, 10];
		}
		let v;
		if (km < .45) {
			v = .51 - Math.abs(km - .25) * .06;
		} else if (km < .7) {
			v = .49 - (km - .45) * .12;
		} else if (km < 1.4) {
			v = .46 - (km - .7) * .035;
		} else {
			v = .437 + Math.pow((km - 1.4) / 3.6, 1.1) * .093;
		}
		const amp = km < .7 ? .006 : .016 + km * .007;
		return heatColor(v + patch * (1 + patchy(x, y) * .35) + spot + soft(x, y) * .008 + (g2(x, y) - .5) * 2 * amp);
	};
};

const dopplerBlobs = [
	// cool areas near the ground
	[8, 250, 50, 26, -.22], [50, 240, 40, 20, -.14], [80, 250, 40, 14, -.08], [316, 232, 26, 14, -.18], [285, 245, 26, 9, -.1],
	[375, 240, 24, 28, -.13], [385, 205, 18, 26, -.12], [410, 185, 9, 18, -.14], [385, 262, 20, 10, -.1], [472, 258, 8, 8, -.16],
	[210, 250, 14, 7, -.14], [120, 262, 14, 4, -.12], [208, 262, 5, 4, -.2], [320, 250, 25, 8, -.08],
	// warm bands
	[0, 202, 46, 20, .36, .1], [48, 192, 40, 12, .2, .22], [95, 186, 34, 16, .16, .1], [195, 208, 46, 17, .27, .15], [215, 202, 34, 12, .14, .28],
	[262, 186, 32, 14, .28, .25], [150, 222, 24, 9, .12, -.2], [185, 235, 32, 8, .2, -.1], [205, 225, 22, 14, .12],
	[195, 245, 12, 5, .14], [305, 213, 14, 5, .2, .2], [330, 203, 22, 5, .2, .22], [290, 206, 22, 5, .14], [262, 248, 18, 5, .2, -.15],
	[283, 257, 12, 7, .24, -.3], [435, 247, 16, 7, .26], [432, 256, 20, 6, .16], [470, 230, 12, 7, .18], [163, 261, 16, 3.500, .2, -.1],
	[197, 263, 5, 4, .3], [445, 236, 28, 3, .1], [340, 261, 10, 3, .14], [470, 190, 16, 22, .14],
	// yellow gap between the bands
	[150, 196, 24, 12, -.1], [185, 183, 14, 9, -.12],
];
const cloud = [
	[294, 41, 22, 11, 1.2], [272, 44, 8, 5, .6], [395, 60, 46, 9, 1.1], [440, 54, 36, 12, .8], [360, 50, 20, 6, .5],
	[70, 31, 16, 5, .55], [250, 43, 12, 8, .5], [312, 32, 4, 8, .9], [315, 56, 14, 6, .7], [470, 46, 12, 6, .7],
];
const cloudBase = [[236, 107, 20, 4, 1.1], [200, 114, 14, 2.500, .6], [265, 113, 18, 4, .7], [292, 117, 22, 3, .5]];

const dopplerPixel = () => {
	const g1 = makeGates(99);
	const g2 = makeGates(140);
	const g3 = makeGates(223);
	const rnd = makeRandom(401);
	const soft = makeField(5, 15, 7);
	const fine = makeField(8, 6, 3.500);
	const wide = makeField(17, 55, 38);
	const streak = makeField(43, 1.6, 50);
	const column = Array.from({ length: 478 }, () => {
		const r = rnd();
		return r > .84 ? 1.1 : r * 1.4 - .75;
	});
	return (x, y) => {
		const r = g1(x, y);
		const s = g2(x, y);
		const t = g3(x, y);
		if (y >= 265) {
			return r < .6 ? [0, 0, 0] : heatColor(.6);
		}
		const c = cloud.reduce((m, b) => Math.max(m, blob(x, y, b)), 0);
		if (s < c * 1.5 - .1) {
			return heatColor(.465 + (r - .4) * .07);
		}
		const b = cloudBase.reduce((m, o) => Math.max(m, blob(x, y, o)), 0);
		if (s < b * 1.3 - .15) {
			return heatColor((x > 258 ? .47 : y < 108 ? .58 : .68) + (r - .5) * .08);
		}
		const col = column[x] * .65 + streak(x, y) * .7;
		const green = clamp((x - 290) / 90, 0, 1) * clamp((500 - x) / 50, 0, 1);
		const warm = dopplerBlobs.reduce((m, o) => m + blob(x, y, o), 0);
		const low = .595 + warm + soft(x, y) * .065 + fine(x, y) * .045;
		const edge = 208 + wide(x, 30) * 10 + col * 6;
		const k = clamp((edge - y) / 70, 0, 1);
		const upper = clamp((150 + wide(x, 90) * 18 - y) / 60, 0, 1);
		if (r < upper) {
			if (t < (y < 40 ? .14 : .08)) {
				return [0, 0, 0];
			}
			const pink = .29 + (y < 45 ? .16 : 0) + col * .5 - green * .08 + wide(x, y) * .08;
			if (s < pink) {
				return [255, 0, 255];
			}
			if (s < pink + .16) {
				return [170, 100, 150];
			}
			const cool = y < 120 ? .36 : .42;
			return heatColor(cool + t * .36 - green * .05);
		}
		const mid = low + k * (.25 - green * .27 + wide(x, y) * .06) + col * .2 * Math.min(1, k * 1.6);
		const v = mid + (s - .5) * (.045 + k * .38) + Math.max(0, warm) * (t - .5) * .3;
		if (t < k * .05) {
			return [20, 0, 20];
		}
		return heatColor(v > .9 && t > .4 ? 1 : Math.min(v, 1));
	};
};

const HeatMap = ({ pixel }) => {
	const ref = useRef(null);

	useEffect(() => {
		const ctx = ref.current.getContext('2d');
		const img = ctx.createImageData(477, 266);
		const get = pixel();
		for (let y = 0; y < 266; y++) {
			for (let x = 0; x < 477; x++) {
				const [r, g, b] = get(x, y);
				img.data.set([r, g, b, 255], (y * 477 + x) * 4);
			}
		}
		ctx.putImageData(img, 0, 0);
	}, [pixel]);

	return <canvas ref={ref} width="477" height="266" />;
};

const HeatChart = ({ pixel, rangeY }) => (
	<HeatPanel $w={576} $h={300}>
		<svg width="576" height="296" viewBox="0 2 576 296">
			{Array.from({ length: 11 }, (_, i) => {
				const y = 10.5 + i * 26.5;
				const text = String(5000 - i * 500);
				return (
					<g key={text}>
						<SvgText x={65} y={y - .5} w={text.length * 6.900} anchor="end" size={13} bold>{text}</SvgText>
						<path d={`M68 ${Math.round(y)}.5h5`} stroke="#000" />
					</g>
				);
			})}
			<path d="M74.500 9v268M74 9.500h478" stroke="#6b6b60" fill="none" />
			<path d="M552.500 9v268M75 276.500h478" stroke="#a8f09a" fill="none" />
			<path d="M75.500 278v5M551.500 278v5" stroke="#000" />
			<SvgText x={74} y={290} w={50} size={13} bold>1720184</SvgText>
			<SvgText x={550} y={290} w={49} size={13} bold>1720683</SvgText>
			<SvgText x={26} y={rangeY} w={58} size={12} bold rotate={-90}>Range (m)</SvgText>
		</svg>
		<HeatMap pixel={pixel} />
	</HeatPanel>
);

const ColorScale = ({ id, labels, title, titleW, titleY, velocity }) => (
	<svg width="74" height="152" viewBox="0 0 74 152">
		<defs>
			<linearGradient id={id} x1="0" y1="1" x2="0" y2="0">
				<stop offset="0" stopColor="#d0d0d0" />
				<stop offset=".14" stopColor="#3030ff" />
				<stop offset=".29" stopColor="#1e8c8c" />
				<stop offset=".45" stopColor="#00ff00" />
				<stop offset=".48" stopColor="#00ff00" />
				<stop offset=".59" stopColor="#ffff28" />
				<stop offset=".69" stopColor="#ffc000" />
				<stop offset=".78" stopColor="#ff0000" />
				<stop offset="1" stopColor="#90009a" />
			</linearGradient>
		</defs>
		<path d="M0 0h20v150H0z" fill={velocity ? '#000' : '#d872c4'} />
		<path d="M1 6h18v138H1z" fill={`url(#${id})`} />
		{velocity ? (
			<>
				<path d="M1 1h18v3H1z" fill="#e620e0" />
				<path d="M1 141h18v3H1z" fill="#fff" />
			</>
		) : (
			<>
				<path d="M0 0h20v5H0z" fill="#e0d4d8" />
				<path d="M1 1h18v3H1zM1 146h18v3H1z" fill="#000" />
				<path d="M1 141h18v3H1z" fill="#fff" />
			</>
		)}
		{labels.map(([text, y]) => (
			<g key={y}>
				<path d={`M22 ${y + .5}h5`} stroke="#000" />
				<SvgText x={27} y={y - .5} w={text.length === 4 ? 22 : 17} anchor="start" size={13} bold>{text}</SvgText>
			</g>
		))}
		<SvgText x={64} y={titleY} w={titleW} size={12} bold rotate={90}>{title}</SvgText>
	</svg>
);

/* ---------- front panel ---------- */

const LidarPanel = () => (
	<BlueFrame>
		<FrontPanel>
			<LeftColumn>
				<LeftScope $w={408} $h={156} $mt={0}>
					<LineScope
						left={71}
						top={10}
						height={103}
						rows={4.9}
						major={5}
						yLabels={[['1.20', 10.5], ['1.15', 34.5], ['1.10', 59.5], ['1.05', 83.5], ['0.99', 112.5]]}
						yTitle="A-scope"
						yTitleW={44}
						path={aScopePath()}
						cursor={255}
						titleX={225}
						titleW={57}
					>
						<path d="M64 107.500h5" stroke="#000" />
					</LineScope>
				</LeftScope>
				<ControlGroup>
					<RenewBox>
						<Row>
							<MetalButton $w={188} $h={36}>
								<Fit w={168} size={17}>Renew background now</Fit>
							</MetalButton>
							<Led />
						</Row>
						<Row $mt={5} $pl={10}>
							<Fit w={107} size={12} bold>Rays in background</Fit>
							<Spin />
							<Inset $w={28} $h={24} $bg="#ffbe0a">
								<Fit w={7} size={12} bold>8</Fit>
							</Inset>
						</Row>
					</RenewBox>
					<ScannerBox>
						<Fit w={86} size={12} bold color={navy}>Scanner position</Fit>
						<Row $pl={23} $mt={4} $gap={3}>
							<Fit w={23} size={18}>AZ</Fit>
							<Inset $w={95} $h={35} $b={4} $pl={0}><Fit w={64} size={19}>090.001</Fit></Inset>
						</Row>
						<Row $pl={29} $mt={13} $gap={4}>
							<Fit w={16} size={18}>EL</Fit>
							<Inset $w={95} $h={35} $b={4} $pl={0}><Fit w={64} size={19}>089.999</Fit></Inset>
						</Row>
					</ScannerBox>
					<SnrBox>
						<Fit w={122} size={12} bold>Display SNR threshold</Fit>
						<Spin />
						<Inset $w={42} $h={24} $bg="#ffbe0a" $pl={1}>
							<Fit w={31} size={12} bold>1.002</Fit>
						</Inset>
					</SnrBox>
				</ControlGroup>
				<LeftScope $w={408} $h={156} $mt={35}>
					<LineScope
						left={76}
						top={10}
						height={103}
						rows={5.15}
						major={5}
						yLabels={[['5.00', 10.5], ['2.50', 35.5], ['0.00', 61.5], ['-2.50', 86.5], ['-5.00', 112.5]]}
						yTitle="Velocity (m/s)"
						yTitleW={76}
						path={velocityPath()}
						titleX={228}
						titleW={57}
					>
						<path
							d={upSpikes.map((x) => `M${76 + x} 10v50`).join('') + downSpikes.map((x) => `M${76 + x} 58v55`).join('') + 'M275.500 60v35M125.500 36v24M144.500 38v22M336 30v30'}
							stroke="#fff"
							strokeWidth="1.400"
						/>
					</LineScope>
				</LeftScope>
				<LogBox>
					<LogHeader>
						<div>
							<Row $pl={11}><Fit w={71} size={12} bold color={navy}>Data Logging</Fit></Row>
							<Row $pl={15} $mt={2}><Fit w={106} size={12} bold>Processed Data file</Fit></Row>
						</div>
						<Row $align="flex-start" $mt={11}>
							<MetalButton $w={134} $h={24}><Fit w={121} size={12} bold>Restart processed file</Fit></MetalButton>
						</Row>
						<Row $align="flex-start" $mt={13}><Fit w={44} size={12} bold color={navy}>Logging</Fit></Row>
					</LogHeader>
					<PathRow>
						<Drive><Fit w={7} size={13}>C</Fit></Drive>
						<PathIcon />
						<PathField>
							<Fit w={245} size={10} lh={14}>C:\Lidar\Data\Proc\2023\202308\20230816\Stare_122_20230816_00.hpl</Fit>
						</PathField>
						<LogSwitch>
							<Fit w={18} size={12} bold>ON</Fit>
							<svg width="14" height="14" viewBox="0 0 14 14"><path d="M4 0q9 2 9 7 0 5-9 7z" fill="#33e01a" /></svg>
						</LogSwitch>
					</PathRow>
					<Row $pl={13}><Fit w={78} size={12} lh={15} bold>RAW Data file</Fit></Row>
					<PathRow>
						<Drive><Fit w={7} size={13}>C</Fit></Drive>
						<PathIcon />
						<PathField />
						<LogSwitch>
							<Fit w={20} size={12} bold>OFF</Fit>
							<svg width="14" height="14" viewBox="0 0 14 14"><path d="M3 0q9 2 9 7 0 5-9 7z" fill="#1d4a14" /></svg>
						</LogSwitch>
					</PathRow>
				</LogBox>
				<Row $mt={8} $pl={9} $gap={140}>
					<MetalButton $w={100} $h={48} $color="#d8181c">
						<Fit w={37} size={15} lh={21}>STOP</Fit>
						<Fit w={60} size={15} lh={21}>software</Fit>
					</MetalButton>
					<MetalButton $w={116} $h={48}>
						<Fit w={99} size={15} lh={21}>Change LiDAR</Fit>
						<Fit w={55} size={15} lh={21}>Settings</Fit>
					</MetalButton>
				</Row>
			</LeftColumn>
			<RightColumn>
				<ChartTitle $h={33} $pt={8}><Fit w={77} size={15}>Backscatter</Fit></ChartTitle>
				<ChartRow>
					<HeatChart pixel={backscatterPixel} rangeY={142} />
					<ColorScale id="backScale" labels={[['-3.0', 6], ['-5.5', 75], ['-8.0', 144]]} title="log B (/m/sr)" titleW={70} titleY={74} />
				</ChartRow>
				<ChartTitle $h={26} $pt={1}>
					<Fit w={55} size={15}>Doppler</Fit>
					<Row $pl={119} $gap={4}>
						<Fit w={87} size={12} lh={20} bold>Average number</Fit>
						<Inset $w={28} $h={22} $bg="#d5d5d5" $pl={2}><Fit w={6} size={12} bold>1</Fit></Inset>
						<Fit w={11} size={12} bold>of</Fit>
						<Inset $w={28} $h={22} $bg="#d5d5d5" $pl={2}><Fit w={6} size={12} bold>1</Fit></Inset>
					</Row>
					<Row $pl={103} $gap={13}>
						<Fit w={66} size={12} lh={20} bold>Backscatter</Fit>
						<svg width="26" height="22" viewBox="0 0 26 22">
							<ellipse cx="16" cy="18" rx="5" ry="5" fill="#5d5038" opacity=".7" />
							<circle cx="18" cy="10" r="7" fill="#8f8c80" />
							<path d="M5 6h15q3 4 0 8H5z" fill="#3a3a3a" />
							<path d="M5 7h15v2H5z" fill="#777" />
							<circle cx="5" cy="10" r="4" fill="#d0d0d0" />
						</svg>
					</Row>
				</ChartTitle>
				<ChartRow>
					<HeatChart pixel={dopplerPixel} rangeY={143} />
					<ColorScale id="dopplerScale" velocity labels={[['4.0', 6], ['0.0', 75], ['-4.0', 144]]} title="Velocity (m/s)" titleW={77} titleY={72} />
				</ChartRow>
			</RightColumn>
		</FrontPanel>
	</BlueFrame>
);

/* ---------- taskbars ---------- */

const RemoteTaskbar = styled.div`
	display: flex;
	align-items: center;
	height: 41px;
	padding-left: 9px;
	border-top: 1px solid #222a36;
	box-shadow: inset 0 1px 0 #d9e5f2;
	background: linear-gradient(90deg, #7c90aa 0, #8196b0 40px, #a9c0db 62px, #a9c0db 1235px, #7f93ab 1265px, #8094ab 100%);
`;

const TaskButton = styled.span`
	display: grid;
	place-items: center;
	flex: none;
	width: ${p => p.$w || 60}px;
	height: 39px;
	margin-left: ${p => p.$ml || 2}px;
	border: 1px solid #4e6480;
	border-radius: 3px;
	box-shadow: inset 0 0 0 1px rgba(255, 255, 255, .55);
	background: ${p => p.$active
		? 'linear-gradient(160deg, #f4f8fc, #dfe8f3 60%, #cfdded)'
		: 'linear-gradient(150deg, #cfdeee 0, #b6cadf 45%, #a3bbd6 55%, #afc6df)'};
`;

const Stack = styled.span`
	width: ${p => p.$w}px;
	height: ${p => p.$h}px;
	border: 1px solid #8096b0;
	border-left: 0;
	border-radius: 0 3px 3px 0;
`;

const Clock = styled.div`
	display: flex;
	flex-direction: column;
	align-items: center;
	margin-right: ${p => p.$mr || 0}px;
	color: #fff;
`;

const ShowDesktop = styled.span`
	flex: none;
	width: ${p => p.$w}px;
	height: 100%;
	border: 1px solid #16233f;
	box-shadow: inset 0 0 0 1px rgba(200, 215, 235, .5);
	background: ${p => p.$bg};
`;

const Up = () => (
	<svg width="9" height="5" viewBox="0 0 11 6"><path d="M0 6l5.500-6L11 6z" fill="#fff" /></svg>
);

const RemoteTray = styled.div`
	display: flex;
	align-items: center;
	height: 100%;
	margin-left: auto;

	> svg:nth-child(2) {
		margin-left: 11px;
	}

	> svg:nth-child(3) {
		margin: 0 17px 0 6px;
	}
`;

const TeamViewerTab = styled.div`
	position: absolute;
	left: 1731px;
	top: 832px;
`;

const Taskbar = styled.footer`
	position: absolute;
	left: 0;
	top: 1032px;
	width: 1920px;
	height: 48px;
	display: flex;
	align-items: center;
	padding-left: 11px;
	border-top: 1px solid #555b66;
	box-shadow: inset 0 1px 0 rgba(255, 255, 255, .6);
	background:
		linear-gradient(rgba(255, 255, 255, .25), rgba(255, 255, 255, 0) 16px),
		linear-gradient(90deg, #a9acb2 0, #c6c8cd 80px, #d8dae0 110px, #dadce1 200px, #e8e9ee 350px, #f0f2f7 480px, #f2f4f8 1465px, #2c5399 1482px, #2a559f 1610px, #1e3e78 1650px, #27467f 1780px, #1f3c74 1900px);
`;

const AppSlot = styled.span`
	display: grid;
	place-items: center;
	flex: none;
	width: ${p => p.$w}px;
	height: 46px;
	margin-left: ${p => p.$ml || 0}px;
	${p => p.$open && css`
		border: 1px solid #55595f;
		border-radius: 3px;
		background: linear-gradient(135deg, #f2f2f4, #dcdde1 60%, #eceef2);
		box-shadow: inset 0 0 0 1px #fff;
	`}
`;

const Tray = styled.div`
	display: flex;
	align-items: center;
	gap: 11px;
	height: 100%;
	margin-left: auto;
`;

const remoteApps = [ControlPanelIcon, NotesIcon, PowerIcon, XrIcon, CmdIcon, SchedIcon];

const RemoteDesktop = () => (
	<RemoteWindow>
		<RemoteTitle>
			<TitleText>
				<MonitorIcon size={19} remote />
				<Fit w={292} size={14.500} lh={19}>192.168.0.150 - Remote Desktop Connection</Fit>
			</TitleText>
			<CaptionButtons>
				<span>
					<svg width="17" height="14" viewBox="0 0 17 14"><path d="M.5 8.500h16v4H.5z" fill="#fff" stroke="#44557a" /></svg>
				</span>
				<span>
					<svg width="18" height="14" viewBox="0 0 18 14"><path d="M.5 .5h17v13H.5zM4.500 4.500v5h9v-5z" fill="#fff" fillRule="evenodd" stroke="#44557a" /></svg>
				</span>
				<span>
					<svg width="16" height="14" viewBox="0 0 16 14"><path d="M.5 .5h5L8 4l2.500-3.500h5L11 7l4.500 6.500h-5L8 10l-2.500 3.500h-5L5 7z" fill="#fff" stroke="#44557a" /></svg>
				</span>
			</CaptionButtons>
		</RemoteTitle>
		<RemoteScreen>
			<ViTitle>
				<ViIcon />
				<Fit w={120} size={12}>StreamLine XR v14-6.vi</Fit>
				<ViButton $first>
					<svg width="12" height="11" viewBox="0 0 12 11"><path d="M.5 5.500h10v4H.5z" fill="#f2f2f2" stroke="#4f5b69" /></svg>
				</ViButton>
				<ViButton>
					<svg width="13" height="11" viewBox="0 0 13 11">
						<path d="M4.500 .5h7v6h-7z" fill="#eee" stroke="#4f5b69" />
						<path d="M.5 3.500h7v7h-7zM3 6h2v2H3z" fill="#eee" fillRule="evenodd" stroke="#4f5b69" />
					</svg>
				</ViButton>
				<ViButton $dim>
					<svg width="12" height="10" viewBox="0 0 16 14"><path d="M.5 .5h5L8 4l2.500-3.500h5L11 7l4.500 6.500h-5L8 10l-2.500 3.500h-5L5 7z" fill="#e8eef4" stroke="#5c6978" strokeWidth="1.400" /></svg>
				</ViButton>
			</ViTitle>
			<MdiArea>
				<TabRow>
					<Tab $w={101}><Fit w={83} size={13} bold>System setup</Fit></Tab>
					<Tab $w={112} $active><Fit w={89} size={13} bold>Real time data</Fit></Tab>
					<Tab $w={115}><Fit w={97} size={13} bold>Temp/humidity</Fit></Tab>
					<Tab $w={89}><Fit w={68} size={13} bold>Scheduling</Fit></Tab>
					<Tab $w={97}><Fit w={78} size={13} bold>Wind profile</Fit></Tab>
				</TabRow>
				<TabPage>
					<LidarPanel />
				</TabPage>
			</MdiArea>
			<RemoteTaskbar>
				<Orb size={37} />
				<TaskButton $w={52} $ml={13}><NotepadIcon /></TaskButton>
				<Stack $w={4} $h={37} />
				<Stack $w={4} $h={37} />
				{remoteApps.map((Icon, i) => (
					<TaskButton key={i} $active={Icon === XrIcon}><Icon /></TaskButton>
				))}
				<TaskButton><FoldersIcon size={33} /></TaskButton>
				<RemoteTray>
					<Up />
					<SpeakerIcon />
					<FlagIcon />
					<Clock $mr={12}>
						<Fit w={27} size={11.500} lh={17}>00:30</Fit>
						<Fit w={58} size={11.500} lh={17}>16/08/2023</Fit>
					</Clock>
					<ShowDesktop $w={15} $bg="linear-gradient(160deg, #7d8b9c, #5b6978 50%, #8291a3)" />
				</RemoteTray>
			</RemoteTaskbar>
		</RemoteScreen>
	</RemoteWindow>
);

const App = () => (
	<>
		<GlobalStyle />
		<Desktop>
			<Streaks />
			<DesktopIcons>
				<DesktopItem>
					<IconStack><RecycleIcon /></IconStack>
					<Fit w={75} size={14}>Recycle Bin</Fit>
				</DesktopItem>
				<DesktopItem>
					<IconStack><BlViewIcon /></IconStack>
					<Fit w={54} size={14}>BL-View</Fit>
				</DesktopItem>
				<DesktopItem>
					<IconStack><ChromeIcon size={60} /><ShortcutBadge /></IconStack>
					<Fit w={49} size={14}>Google</Fit>
					<Fit w={52} size={14}>Chrome</Fit>
				</DesktopItem>
			</DesktopIcons>
			<Explorer />
			<RemoteDesktop />
			<TeamViewerTab>
				<svg width="25" height="52" viewBox="0 0 25 52">
					<path d="M25 0H3Q0 0 0 3v34q0 2 2 3l23 12z" fill="#fff" />
					<path d="M3.500 5.500h20v20h-20z" fill="#1492e6" />
					<circle cx="13.500" cy="15.500" r="9" fill="#fff" />
					<path d="M6 15.500l4.500-3v2h6v-2l4.500 3-4.500 3v-2h-6v2z" fill="#1478d4" />
				</svg>
			</TeamViewerTab>
			<Taskbar>
				<Orb size={43} />
				<AppSlot $w={66} $ml={18}><IeIcon /></AppSlot>
				<AppSlot $w={62} $ml={3} $open><FoldersIcon size={40} /></AppSlot>
				<Stack $w={5} $h={45} />
				<AppSlot $w={66} $ml={2}><PlayerIcon /></AppSlot>
				<AppSlot $w={66} $ml={6}><ChromeIcon size={40} /></AppSlot>
				<AppSlot $w={62} $ml={3} $open><MonitorIcon size={40} remote /></AppSlot>
				<Stack $w={5} $h={45} />
				<Tray>
					<Up />
					<span />
					<FlagIcon error size={19} />
					<BatteryIcon />
					<NetworkIcon />
					<SpeakerIcon muted size={19} />
					<span />
					<Clock $mr={3}>
						<Fit w={35} size={14} lh={22}>00:30</Fit>
						<Fit w={75} size={14} lh={22}>16/08/2023</Fit>
					</Clock>
					<ShowDesktop $w={14} $bg="linear-gradient(#3c5f9e, #1b3568 50%, #2c4f92)" />
				</Tray>
			</Taskbar>
		</Desktop>
	</>
);

export default App;
